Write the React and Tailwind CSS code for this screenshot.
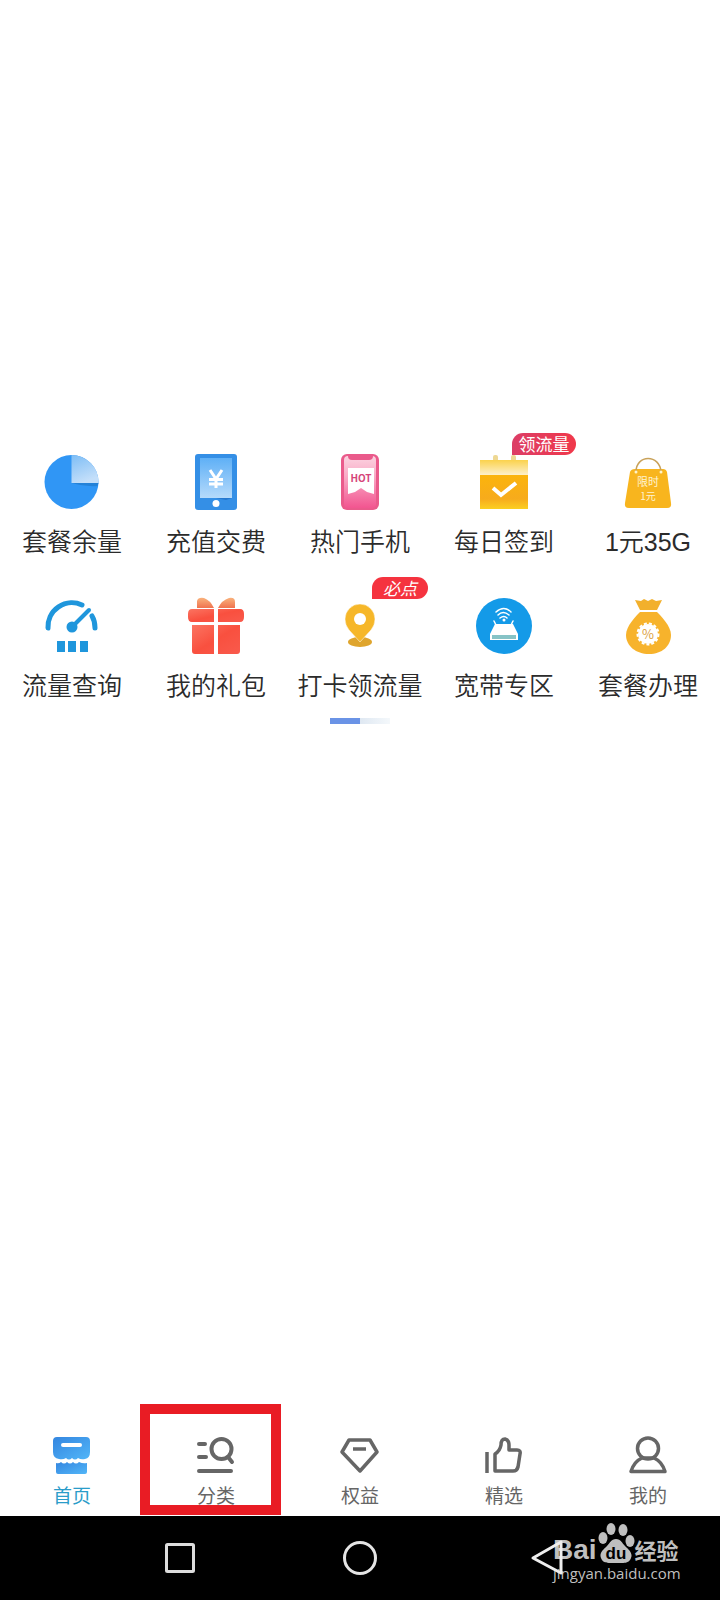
const PieIcon = () => (
    <>
        <defs>
            <linearGradient id="pie" x1="0" y1="0" x2="0.4" y2="1">
                <stop offset="0" stopColor="#7dbdf5" />
                <stop offset="1" stopColor="#c4dffa" />
            </linearGradient>
        </defs>
        <circle cx="27.5" cy="28" r="27" fill="#3096f5" />
        <path d="M27.5 29V1a27 27 0 0 1 27 28z" fill="url(#pie)" />
        <path d="M27.5 29h27l-1 3q-13 1-26-3z" fill="#2482d8" />
    </>
);

const TabletIcon = () => (
    <>
        <defs>
            <linearGradient id="tablet" x1="0" y1="0" x2="0" y2="1">
                <stop offset="0" stopColor="#5fb0f6" />
                <stop offset="1" stopColor="#b5dafb" />
            </linearGradient>
        </defs>
        <rect x="7" width="42" height="56" rx="3" fill="#348fe6" />
        <rect x="12" y="4" width="32" height="40" fill="url(#tablet)" />
        <path d="M28 44h16l-6 2z" fill="#2477cf" />
        <circle cx="28" cy="49.5" r="3.5" fill="#fff" />
        <path d="M22 16l6 9 6-9M28 25v9M21 25.5h14M21 30h14" fill="none" stroke="#fff" strokeWidth="3" />
    </>
);

const HotPhoneIcon = () => (
    <>
        <defs>
            <linearGradient id="hot" x1="0" y1="0" x2="0" y2="1">
                <stop offset="0" stopColor="#fbd3e0" />
                <stop offset="0.4" stopColor="#f9a9c5" />
                <stop offset="1" stopColor="#f25590" />
            </linearGradient>
        </defs>
        <rect x="9" width="38" height="56" rx="6" fill="#ea5a8b" />
        <rect x="12" y="2" width="32" height="52" rx="4" fill="url(#hot)" />
        <path d="M16 0h25v2q0 4-4 4H20q-4 0-4-4z" fill="#ea5a8b" />
        <path d="M16 14h26v26l-7-2-6-4-6 4-7 2z" fill="#fff" />
        <text x="29" y="28" textAnchor="middle" className="text-[10px] font-bold" fill="#d6457a">HOT</text>
    </>
);

const CalendarIcon = () => (
    <>
        <defs>
            <linearGradient id="calHead" x1="0" y1="0" x2="0" y2="1">
                <stop offset="0" stopColor="#fbd24c" />
                <stop offset="1" stopColor="#fdf0cb" />
            </linearGradient>
            <linearGradient id="calBody" x1="0" y1="0" x2="0" y2="1">
                <stop offset="0" stopColor="#fbb40c" />
                <stop offset="0.7" stopColor="#f7ab1c" />
                <stop offset="1" stopColor="#fbcf22" />
            </linearGradient>
        </defs>
        <rect x="17" y="1" width="5" height="8" rx="2" fill="#eed894" />
        <rect x="35" y="1" width="5" height="8" rx="2" fill="#eed894" />
        <rect x="4" y="6" width="48" height="15" fill="url(#calHead)" />
        <rect x="4" y="21" width="48" height="34" fill="url(#calBody)" />
        <path d="M17 34l8 7 15-12" fill="none" stroke="#fff" strokeWidth="4" />
    </>
);

const BagIcon = () => (
    <>
        <path d="M15 15h28q3 0 4 3l4 31q1 5-4 5H9q-5 0-4-5l5-31q1-3 5-3z" fill="#f8b51e" />
        <path d="M16 18C16 0 40 0 41 18" fill="none" stroke="#c9a25a" strokeWidth="1.5" />
        <circle cx="16" cy="18" r="1.5" fill="#fff3c9" />
        <circle cx="41" cy="18" r="1.5" fill="#fff3c9" />
        <text x="28" y="32" textAnchor="middle" className="text-[11px]" fill="#fff3d0">限时</text>
        <text x="28" y="46" textAnchor="middle" className="text-[10px]" fill="#fff3d0">1元</text>
    </>
);

const GaugeIcon = () => (
    <>
        <g fill="none" stroke="#1f96dc" strokeWidth="5" strokeLinecap="round">
            <path d="M4 30A24 24 0 0 1 38 7" />
            <path d="M48 18Q51 23 51 30" />
            <path d="M28 29L45 12" strokeWidth="4" />
        </g>
        <circle cx="28" cy="29" r="5.5" fill="#1f96dc" />
        <path d="M13 43h8v11h-8zM24 43h8v11h-8zM36 43h8v11h-8z" fill="#1f96dc" />
    </>
);

const GiftIcon = () => (
    <>
        <defs>
            <linearGradient id="bow" x1="0" y1="0" x2="0" y2="1">
                <stop offset="0" stopColor="#f9b27c" />
                <stop offset="1" stopColor="#f0734f" />
            </linearGradient>
            <linearGradient id="gift" x1="0" y1="0" x2="1" y2="1">
                <stop offset="0" stopColor="#fb7461" />
                <stop offset="0.5" stopColor="#f9503f" />
                <stop offset="1" stopColor="#f95a4c" />
            </linearGradient>
        </defs>
        <path d="M9 10V3Q10-1 16 0q6 2 10 10zM30 10Q34 2 41 0q6-1 6 4v6z" fill="url(#bow)" />
        <path d="M4 11h22v13H4q-4 0-4-5v-3q0-5 4-5zM30 11h22q4 0 4 5v3q0 5-4 5H30z" fill="url(#gift)" />
        <path d="M4 27h22v29H7q-3 0-3-3zM30 27h22v26q0 3-3 3H30z" fill="url(#gift)" />
    </>
);

const PinIcon = () => (
    <>
        <ellipse cx="28" cy="44" rx="12" ry="5" fill="#dfa52e" />
        <path d="M28 44L17 32Q13 27 13 21a15 15 0 0 1 30 0q0 6-4 11z" fill="#f6b729" stroke="#fff" strokeWidth="0.5" />
        <circle cx="28" cy="21" r="6" fill="#fff" />
    </>
);

const RouterIcon = () => (
    <>
        <circle cx="28" cy="28" r="28" fill="#149ae8" />
        <g fill="none" stroke="#fff" strokeWidth="1.5" strokeLinecap="round">
            <path d="M20 14q8-7 15 0M22 17q5-5 11 0M24 20q4-3 7 0" />
            <path d="M18 23l2 4M37 23l-2 4" />
        </g>
        <circle cx="28" cy="22" r="1.5" fill="#fff" />
        <path d="M19 26h18l5 10v6H14v-6z" fill="#fff" />
        <path d="M16 37h24v4H16z" fill="#86c3c6" />
    </>
);

const MoneyBagIcon = () => (
    <>
        <path d="M15 2l6 1 3-2 4 2 4-2 4 2 6-1-5 10H20z" fill="#f2b02c" />
        <path d="M20 14h17c4 4 14 14 14 23 0 11-9 19-22 19S6 48 6 37c0-9 10-19 14-23z" fill="#f7b32c" />
        <circle cx="28" cy="36" r="10" fill="#fff" />
        <circle cx="28" cy="36" r="10.5" fill="none" stroke="#fff" strokeWidth="2" strokeDasharray="3 2" />
        <text x="28" y="41" textAnchor="middle" className="text-[13px]" fill="#dba141">%</text>
    </>
);

const HomeIcon = () => (
    <>
        <defs>
            <linearGradient id="home" x1="0" y1="0" x2="1" y2="1">
                <stop offset="0" stopColor="#3486e0" />
                <stop offset="1" stopColor="#52b6f8" />
            </linearGradient>
        </defs>
        <path d="M5 1h29q4 0 4 4v11q0 6-5 7-4 1-7-1-3 3-6 0-3 3-6 0-3 2-7 1-6-1-6-7V5q0-4 4-4z" fill="url(#home)" />
        <path d="M4 27q3 1 5-1 3 3 6 0 3 3 6 0 3 3 6 0 4 2 8 1v9q0 2-2 2H6q-2 0-2-2z" fill="url(#home)" />
        <path d="M11 9h17" stroke="#fff" strokeWidth="4" strokeLinecap="round" />
    </>
);

const CategoryIcon = () => (
    <g fill="none" stroke="#666" strokeWidth="4" strokeLinecap="round">
        <circle cx="25.5" cy="13" r="10" />
        <path d="M32 21l4 5M3 8h6M3 21h7M3 35h32" />
    </g>
);

const GemIcon = () => (
    <g fill="none" stroke="#666" strokeWidth="3.5" strokeLinejoin="round">
        <path d="M9 4h21l7 12-17 19L2 16z" />
        <path d="M13 13h13" />
    </g>
);

const ThumbIcon = () => (
    <g fill="none" stroke="#666" strokeWidth="3.5" strokeLinejoin="round">
        <path d="M3 16v21" />
        <path d="M11 35V18q5-3 6-9 0-6 4-6 4 1 4 6v5h8q4 0 3 4l-2 13q-1 4-5 4z" />
    </g>
);

const PersonIcon = () => (
    <g fill="none" stroke="#666" strokeWidth="3.5" strokeLinejoin="round">
        <circle cx="20" cy="12.5" r="10.5" />
        <path d="M3 35.5q3-10 11-13.5h12q8 3.500 11 13.500z" />
    </g>
);

const services = [
    { label: "套餐余量", icon: PieIcon },
    { label: "充值交费", icon: TabletIcon },
    { label: "热门手机", icon: HotPhoneIcon },
    { label: "每日签到", icon: CalendarIcon, badge: "领流量", badgeStyle: "left-9 w-16 bg-linear-to-r from-[#dc3d66] to-[#f0384a]" },
    { label: "1元35G", icon: BagIcon },
    { label: "流量查询", icon: GaugeIcon },
    { label: "我的礼包", icon: GiftIcon },
    { label: "打卡领流量", icon: PinIcon, badge: "必点", badgeStyle: "left-10 w-14 bg-[#f5333f] italic" },
    { label: "宽带专区", icon: RouterIcon },
    { label: "套餐办理", icon: MoneyBagIcon },
];

const tabs = [
    { label: "首页", icon: HomeIcon, active: true },
    { label: "分类", icon: CategoryIcon, highlighted: true },
    { label: "权益", icon: GemIcon },
    { label: "精选", icon: ThumbIcon },
    { label: "我的", icon: PersonIcon },
];

const ServiceItem = ({ label, icon: Icon, badge, badgeStyle }) => (
    <button type="button" className="flex flex-col items-center gap-4">
        <span className="relative">
            <svg viewBox="0 0 56 56" className="block size-14 overflow-visible" aria-hidden="true">
                <Icon />
            </svg>
            {badge && (
                <span className={`absolute -top-[21px] h-[22px] rounded-full rounded-bl-none text-center text-[17px] leading-[22px] whitespace-nowrap text-white ${badgeStyle}`}>
                    {badge}
                </span>
            )}
        </span>
        <span className="font-['Liberation_Sans','Noto_Sans_CJK_SC',sans-serif] text-[25px] leading-8 font-[350] whitespace-nowrap text-[#2b2b2b]">{label}</span>
    </button>
);

const TabItem = ({ label, icon: Icon, active, highlighted }) => (
    <button type="button" className="relative flex flex-col items-center gap-2 pt-8 pb-[10px]">
        <svg viewBox="0 0 40 40" className="size-10" aria-hidden="true">
            <Icon />
        </svg>
        <span className={`text-[19px] leading-[22px] ${active ? "text-[#2a9cc9]" : "text-[#666]"}`}>{label}</span>
        {highlighted && <span className="absolute top-0 right-[7px] bottom-px -left-1 border-10 border-[#e91c24]" />}
    </button>
);

const Watermark = () => (
    <div className="pointer-events-none absolute top-1 right-10 w-[127px] text-[#bfbfbf]">
        <div className="flex h-[43px] items-end">
            <span className="font-['Liberation_Sans',sans-serif] text-[28px] leading-[26px] font-bold">Bai</span>
            <svg viewBox="0 0 38 42" className="h-[42px] w-[38px] shrink-0" aria-hidden="true">
                <g fill="currentColor">
                    <ellipse cx="6" cy="17" rx="4.5" ry="6" />
                    <ellipse cx="14" cy="8" rx="4.5" ry="6" />
                    <ellipse cx="26" cy="9" rx="4.5" ry="6" />
                    <ellipse cx="33" cy="20" rx="4.5" ry="6" />
                    <path d="M19 18c5 0 6 4 9 7 4 4 8 7 6 12-2 6-8 5-15 5S6 43 4 37c-2-5 2-8 6-12 3-3 4-7 9-7z" />
                </g>
                <text x="19" y="38" textAnchor="middle" className="font-['Liberation_Sans',sans-serif] text-[17px] font-bold" fill="#000">du</text>
            </svg>
            <span className="text-[22px] leading-7 font-bold whitespace-nowrap">经验</span>
        </div>
        <p className="font-['Open_Sans',sans-serif] text-[15px] leading-5">jingyan.baidu.com</p>
    </div>
);

const SystemBar = () => (
    <div className="relative grid h-[84px] grid-cols-3 place-items-center bg-black px-[12.5%]">
        <Watermark />
        <button type="button" aria-label="最近任务" className="relative">
            <svg viewBox="0 0 48 48" className="size-12" fill="none" stroke="#ddd" strokeWidth="3">
                <rect x="10.5" y="10.5" width="27" height="27" rx="1" />
            </svg>
        </button>
        <button type="button" aria-label="主屏幕" className="relative">
            <svg viewBox="0 0 48 48" className="size-12" fill="none" stroke="#e5e5e5" strokeWidth="3">
                <circle cx="24" cy="24" r="15.5" />
            </svg>
        </button>
        <button type="button" aria-label="返回" className="relative">
            <svg viewBox="0 0 48 48" className="size-12" fill="none" stroke="#eee" strokeWidth="3" strokeLinejoin="round">
                <path d="M45 8v31L17 24z" />
            </svg>
        </button>
    </div>
);

const App = () => {
    return (
        <div className="flex min-h-screen flex-col bg-white font-['Noto_Sans_CJK_SC',sans-serif]">
            <main className="flex-1 pt-[454px]">
                <div className="grid grid-cols-5 gap-y-10">
                    {services.map((item) => (
                        <ServiceItem key={item.label} {...item} />
                    ))}
                </div>
                <div className="mx-auto mt-4 flex h-[6px] w-15 bg-linear-to-r from-[#dfe8f2] from-50% to-[#f4f8fb]">
                    <span className="w-1/2 bg-[#6a93e6]" />
                </div>
            </main>
            <nav className="grid grid-cols-5">
                {tabs.map((tab) => (
                    <TabItem key={tab.label} {...tab} />
                ))}
            </nav>
            <SystemBar />
        </div>
    );
};

export default App;
